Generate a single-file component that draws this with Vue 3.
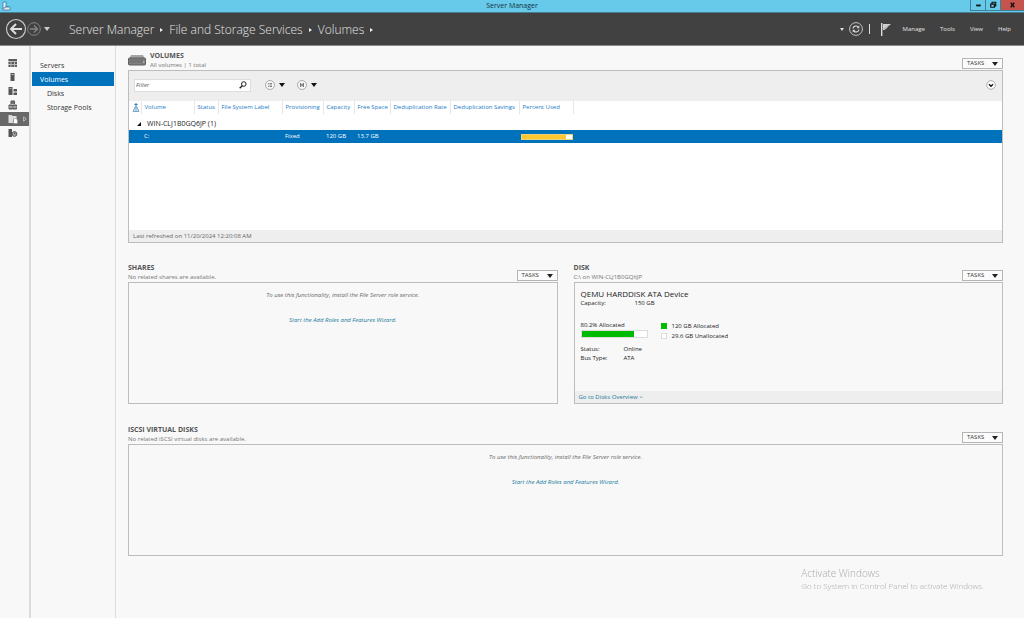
<script setup>
import { ref } from 'vue'

const filter = ref('')
const crumbs = ['Server Manager', 'File and Storage Services', 'Volumes']
const menus = ['Manage', 'Tools', 'View', 'Help']
const nav = [
  { label: 'Servers' },
  { label: 'Volumes', active: true },
  { label: 'Disks', child: true },
  { label: 'Storage Pools', child: true }
]
const columns = [
  { label: 'Volume', cls: 'c-volume' },
  { label: 'Status', cls: 'c-status' },
  { label: 'File System Label', cls: 'c-label' },
  { label: 'Provisioning', cls: 'c-prov' },
  { label: 'Capacity', cls: 'c-cap' },
  { label: 'Free Space', cls: 'c-free' },
  { label: 'Deduplication Rate', cls: 'c-rate' },
  { label: 'Deduplication Savings', cls: 'c-save' },
  { label: 'Percent Used', cls: 'c-used' }
]
const volume = { name: 'C:', provisioning: 'Fixed', capacity: '120 GB', free: '13.7 GB', used: 88 }
const disk = { allocated: 80.2 }
</script>

<template>
  <div class="window">
    <header class="titlebar">
      <svg class="app-icon" viewBox="0 0 10 10" aria-hidden="true">
        <path d="M2 1h3v7H2z" fill="#e6f4fa" stroke="#2c7fae" stroke-width=".8" />
        <path d="M4 6h5v3H2V7h2z" fill="#dcebf2" stroke="#47708a" stroke-width=".7" />
        <path d="M5.500 5h2v1h-2z" fill="#2c7fae" />
      </svg>
      <h1>Server Manager</h1>
      <div class="window-buttons">
        <button class="wb" aria-label="Minimize">
          <svg viewBox="0 0 14 11"><path d="M5 5h5v2H5z" fill="#111" /></svg>
        </button>
        <button class="wb" aria-label="Restore">
          <svg viewBox="0 0 14 11"><path d="M6 4V2.500h4v4H8.500M4.500 4.500h4v3.500h-4z" fill="none" stroke="#111" stroke-width="1.300" /></svg>
        </button>
        <button class="wb close" aria-label="Close">
          <svg viewBox="0 0 24 11"><path d="M10 3l4 5M14 3l-4 5" stroke="#111" stroke-width="1.500" /></svg>
        </button>
      </div>
    </header>

    <div class="toolbar">
      <button class="back" aria-label="Back">
        <svg viewBox="0 0 22 22"><circle cx="11" cy="11" r="9.500" fill="none" stroke="#c8c8c8" stroke-width="1.200" /><path d="M17 11H6M11 6L6 11l5 5" fill="none" stroke="#ddd" stroke-width="2" /></svg>
      </button>
      <button class="forward" aria-label="Forward">
        <svg viewBox="0 0 14 14"><circle cx="7" cy="7" r="6.300" fill="none" stroke="#858585" stroke-width="1" /><path d="M3 7h7M7 3.500L10.500 7 7 10.500" fill="none" stroke="#858585" stroke-width="1.400" /></svg>
      </button>
      <button class="history" aria-label="History">
        <svg viewBox="0 0 6 4"><path d="M0 0h6L3 4z" fill="#ccc" /></svg>
      </button>
      <nav class="crumbs" aria-label="Breadcrumb">
        <template v-for="c in crumbs" :key="c">
          <a href="#">{{ c }}</a>
          <svg viewBox="0 0 3 4" aria-hidden="true"><path d="M0 0l3 2-3 2z" fill="#eee" /></svg>
        </template>
      </nav>
      <div class="actions">
        <button class="more" aria-label="Notifications menu"><svg viewBox="0 0 4 3"><path d="M0 0h4L2 3z" fill="#ddd" /></svg></button>
        <button class="refresh" aria-label="Refresh">
          <svg viewBox="0 0 14 14"><circle cx="7" cy="7" r="6.400" fill="none" stroke="#c4c4c4" /><path d="M4 6.500C4.300 4 7.500 3.200 9.300 5M10 7.500C9.700 10 6.500 10.800 4.700 9" fill="none" stroke="#d6d6d6" stroke-width="1.200" /><path d="M10.300 3.500v2.800H7.500zM3.700 10.500V7.700h2.800z" fill="#d6d6d6" /></svg>
        </button>
        <span class="divider"></span>
        <button class="flag" aria-label="Notifications">
          <svg viewBox="0 0 10 13"><path d="M.7 0v13" stroke="#ddd" stroke-width="1.400" /><path d="M2 1h8L7.200 3.600 6 5 3.500 7H2z" fill="#cfcfcf" /><path d="M3 6l5-4" stroke="#888" stroke-width=".5" /></svg>
        </button>
        <button v-for="m in menus" :key="m" class="menu">{{ m }}</button>
      </div>
    </div>

    <div class="body">
      <aside class="rail">
        <button aria-label="Dashboard"><svg viewBox="0 0 10 10"><path d="M.5 1H9v8H.5z" fill="#bbb" /><path d="M.5 1H9v2H.5zM.5 4h2v2h-2zM3.500 4H6v2H3.500zM7 4h2v2H7zM.5 7h2v2h-2zM3.500 7H6v2H3.500zM7 7h2v2H7z" fill="#5c5c5c" /></svg></button>
        <button aria-label="Local Server"><svg viewBox="0 0 10 10"><path d="M2.500 1h4v8h-4z" fill="#555" /><path d="M3.500 2.500h2" stroke="#ddd" stroke-width=".8" /></svg></button>
        <button aria-label="All Servers"><svg viewBox="0 0 10 10"><path d="M.5 1h4v8h-4zM5.500 3H9v2.500H5.500zM5.500 6.500H9V9H5.500z" fill="#555" /><path d="M1.500 2.500h2" stroke="#ddd" stroke-width=".6" /></svg></button>
        <button aria-label="Server Groups"><svg viewBox="0 0 10 10"><path d="M3 4V1h3.500v3M1 5h3.500v4H1zM5 5h3.500v4H5z" fill="#777" stroke="#555" /><path d="M1 7h8" stroke="#eee" stroke-width=".7" /></svg></button>
        <button class="selected" aria-label="File and Storage Services">
          <svg viewBox="0 0 10 10"><path d="M.5 1h3l1 1h4v3H5v4H.5z" fill="#ddd" /><path d="M5.500 4.500H8L9.500 6v3.500h-4z" fill="#fff" stroke="#777" stroke-width=".4" /></svg>
          <svg class="expand" viewBox="0 0 4 6"><path d="M.6.800L3.300 3 .6 5.200z" fill="none" stroke="#ddd" stroke-width=".7" /></svg>
        </button>
        <button aria-label="Other Services"><svg viewBox="0 0 10 10"><path d="M.5 1H4v8H.5z" fill="#555" /><circle cx="6.500" cy="6" r="2.400" fill="#aaa" stroke="#555" /><path d="M6.500 4.500V6h1" stroke="#444" fill="none" stroke-width=".7" /></svg></button>
      </aside>

      <nav class="side" aria-label="Storage">
        <a v-for="n in nav" :key="n.label" href="#" :class="{ active: n.active, child: n.child }">{{ n.label }}</a>
      </nav>

      <main>
        <section class="panel volumes">
          <div class="head">
            <svg class="drive" viewBox="0 0 18 12" aria-hidden="true"><path d="M3 1h12l2 4H1z" fill="#a5a5a5" /><rect x=".5" y="4" width="17" height="7" rx="1" fill="#808080" stroke="#5f5f5f" /><path d="M2 6h13M2 8h13" stroke="#6d6d6d" /><path d="M15 8h1.500" stroke="#ddd" /></svg>
            <div class="titles">
              <h2>VOLUMES</h2>
              <p>All volumes | 1 total</p>
            </div>
            <button class="tasks">TASKS<svg viewBox="0 0 6 4"><path d="M0 0h6L3 4z" fill="#222" /></svg></button>
          </div>
          <div class="box">
            <div class="filterbar">
              <div class="search">
                <input v-model="filter" type="text" placeholder="Filter" aria-label="Filter" />
                <button aria-label="Search"><svg viewBox="0 0 8 8"><circle cx="4.800" cy="3" r="2.300" fill="none" stroke="#222" /><path d="M3.200 4.700L.7 7.300" stroke="#222" stroke-width="1.400" /></svg></button>
              </div>
              <button class="round" aria-label="Saved queries">
                <svg class="disc" viewBox="0 0 10 10"><circle cx="5" cy="5" r="4.500" fill="#f7f7f7" stroke="#999" stroke-width=".8" /><path d="M3 3.500h.8M3 5h.8M3 6.500h.8M4.500 3.500H7M4.500 5H7M4.500 6.500H7" stroke="#666" stroke-width=".8" /></svg>
                <svg class="caret" viewBox="0 0 6 4"><path d="M0 0h6L3 4z" fill="#111" /></svg>
              </button>
              <button class="round" aria-label="Save query">
                <svg class="disc" viewBox="0 0 10 10"><circle cx="5" cy="5" r="4.500" fill="#f7f7f7" stroke="#999" stroke-width=".8" /><path d="M3 3h4v4H3z" fill="#777" /><path d="M4 3h2v1.300H4zM4 5.700h2V7H4z" fill="#ddd" /></svg>
                <svg class="caret" viewBox="0 0 6 4"><path d="M0 0h6L3 4z" fill="#111" /></svg>
              </button>
              <button class="collapse" aria-label="Expand criteria">
                <svg viewBox="0 0 10 10"><circle cx="5" cy="5" r="4.300" fill="#fff" stroke="#999" stroke-width=".8" /><path d="M3 4.300l2 2 2-2" fill="none" stroke="#111" stroke-width="1.400" /></svg>
              </button>
            </div>
            <div class="grid">
              <table>
                <thead>
                  <tr>
                    <th class="c-icon"><svg viewBox="0 0 8 9" aria-label="Alert"><path d="M2 2l2-2 2 2z" fill="#1f7fc4" /><path d="M4 2.500L7 8.400H1z" fill="#e4f0f8" stroke="#3b7fae" stroke-width=".7" /><path d="M4 4.500v2M4 7v.800" stroke="#2d6f9e" stroke-width=".8" /></svg></th>
                    <th v-for="c in columns" :key="c.label" :class="c.cls">{{ c.label }}</th>
                    <th class="c-rest"></th>
                  </tr>
                </thead>
                <tbody>
                  <tr class="group">
                    <td colspan="11"><svg viewBox="0 0 4 4"><path d="M4 0v4H0z" fill="#111" /></svg>WIN-CLJ1B0GQ6JP (1)</td>
                  </tr>
                  <tr class="row">
                    <td></td>
                    <td>{{ volume.name }}</td>
                    <td></td>
                    <td></td>
                    <td>{{ volume.provisioning }}</td>
                    <td>{{ volume.capacity }}</td>
                    <td>{{ volume.free }}</td>
                    <td></td>
                    <td></td>
                    <td class="meter"><div class="used"><div class="used-fill" :style="{ width: volume.used + '%' }"></div></div></td>
                    <td></td>
                  </tr>
                </tbody>
              </table>
            </div>
            <div class="foot">Last refreshed on 11/20/2024 12:20:08 AM</div>
          </div>
        </section>

        <div class="pair">
          <section class="panel">
            <div class="head">
              <div class="titles">
                <h2>SHARES</h2>
                <p>No related shares are available.</p>
              </div>
              <button class="tasks">TASKS<svg viewBox="0 0 6 4"><path d="M0 0h6L3 4z" fill="#222" /></svg></button>
            </div>
            <div class="box empty">
              <p>To use this functionality, install the File Server role service.</p>
              <a href="#">Start the Add Roles and Features Wizard.</a>
            </div>
          </section>

          <section class="panel">
            <div class="head">
              <div class="titles">
                <h2>DISK</h2>
                <p>C:\ on WIN-CLJ1B0GQ6JP</p>
              </div>
              <button class="tasks">TASKS<svg viewBox="0 0 6 4"><path d="M0 0h6L3 4z" fill="#222" /></svg></button>
            </div>
            <div class="box disk">
              <div class="disk-body">
                <h3>QEMU HARDDISK ATA Device</h3>
                <div class="capacity"><span>Capacity:</span><span>150 GB</span></div>
                <div class="usage">
                  <div class="alloc">
                    <span>{{ disk.allocated }}% Allocated</span>
                    <div class="bar"><div class="bar-fill" :style="{ width: disk.allocated + '%' }"></div></div>
                  </div>
                  <ul class="legend">
                    <li><i class="sw on"></i>120 GB Allocated</li>
                    <li><i class="sw"></i>29.6 GB Unallocated</li>
                  </ul>
                </div>
                <dl>
                  <dt>Status:</dt><dd>Online</dd>
                  <dt>Bus Type:</dt><dd>ATA</dd>
                </dl>
              </div>
              <div class="foot"><a href="#">Go to Disks Overview &gt;</a></div>
            </div>
          </section>
        </div>

        <section class="panel iscsi">
          <div class="head">
            <div class="titles">
              <h2>iSCSI VIRTUAL DISKS</h2>
              <p>No related iSCSI virtual disks are available.</p>
            </div>
            <button class="tasks">TASKS<svg viewBox="0 0 6 4"><path d="M0 0h6L3 4z" fill="#222" /></svg></button>
          </div>
          <div class="box empty">
            <p>To use this functionality, install the File Server role service.</p>
            <a href="#">Start the Add Roles and Features Wizard.</a>
          </div>
        </section>
      </main>
    </div>

    <div class="watermark">
      <strong>Activate Windows</strong>
      <span>Go to System in Control Panel to activate Windows.</span>
    </div>
  </div>
</template>

<style>
body { margin: 0; background: #f8f8f8; }
</style>

<style scoped>
.window {
  min-height: 100vh;
  display: flex;
  flex-direction: column;
  font: 6px/9px "Open Sans", "Noto Sans", sans-serif;
  color: #333;
  background: #f8f8f8;
}
.window * { box-sizing: border-box; }
h1, h2, h3, p, ul, dl, dd { margin: 0; padding: 0; }
button, input { font: inherit; color: inherit; margin: 0; padding: 0; border: 0; background: none; }
svg { display: block; flex: none; }
a { color: inherit; text-decoration: none; }

.titlebar {
  display: grid;
  grid-template-columns: 1fr auto 1fr;
  align-items: center;
  height: 13px;
  background: #67caea;
  border-bottom: 1px solid #4a7d90;
}
.app-icon { width: 10px; height: 10px; margin-left: 1px; }
h1 { font-size: 7px; line-height: 12px; font-weight: 400; color: #16323d; }
.window-buttons { display: flex; justify-content: flex-end; align-self: start; }
.wb { width: 15px; height: 11px; border: 1px solid #3f8096; border-width: 0 0 1px 1px; }
.wb svg { width: 100%; height: 10px; }
.wb.close { width: 24px; background: #c4544d; }

.toolbar {
  display: flex;
  align-items: center;
  height: 33px;
  padding-left: 5px;
  background: #414141;
  border-bottom: 1px solid #8c8c8c;
  color: #e4e4e4;
}
.back svg { width: 22px; height: 22px; }
.forward svg { width: 14px; height: 14px; }
.history { margin-left: 3px; }
.history svg { width: 6px; height: 4px; }
.crumbs { display: flex; align-items: center; gap: 6px; margin-left: 19px; padding-top: 2px; font-size: 12px; line-height: 18px; font-weight: 300; }
.crumbs svg { width: 3px; height: 4px; }
.actions { display: flex; align-items: center; margin-left: auto; padding-right: 13px; }
.more svg { width: 4px; height: 3px; }
.refresh { margin-left: 5px; }
.refresh svg { width: 14px; height: 14px; }
.divider { width: 1px; height: 10px; margin-left: 6px; background: #ddd; }
.flag { margin: 0 12px 0 11px; }
.flag svg { width: 10px; height: 13px; }
.menu + .menu { margin-left: 15px; }

.body { display: flex; flex: 1; }
.rail { width: 31px; padding-top: 10px; border-right: 2px solid #dcdcdc; }
.rail button { display: flex; align-items: center; width: 100%; height: 14px; padding-left: 8px; }
.rail svg { width: 10px; height: 10px; }
.rail .selected { background: #686868; }
.rail .expand { width: 4px; height: 6px; margin-left: 5px; }
.side { width: 85px; padding: 12px 1px 0; border-right: 1px solid #dcdcdc; }
.side a { display: block; padding: 2px 0 0 8px; font-size: 7px; line-height: 12px; }
.side .child { padding-left: 15px; }
.side .active { background: #0072bc; color: #fff; }

main { flex: 1; min-width: 0; padding: 4px 21px 0 12px; }
.head { display: flex; align-items: flex-end; min-height: 20px; }
.drive { width: 18px; height: 12px; margin: 0 4px 4px 0; }
.titles { flex: 1; }
h2 { font-size: 7px; line-height: 10px; font-weight: 700; color: #555; }
.head p { color: #777; }
.tasks { display: flex; align-items: center; justify-content: space-between; width: 41px; height: 11px; margin-bottom: 1px; padding: 0 4px; border: 1px solid #b5b5b5; background: #fbfbfb; }
.tasks svg { width: 6px; height: 4px; }
.box { display: flex; flex-direction: column; border: 1px solid #bdbdbd; }
.filterbar { display: flex; align-items: center; height: 30px; padding: 0 6px 2px 5px; background: #eee; }
.search { display: flex; align-items: center; width: 117px; height: 13px; padding-right: 3px; border: 1px solid #ddd; background: #fff; }
.search input { flex: 1; min-width: 0; padding-left: 1px; outline: 0; font-style: italic; }
.search input::placeholder { color: #555; opacity: 1; }
.search svg { width: 8px; height: 8px; }
.round { display: flex; align-items: center; gap: 4px; margin-left: 14px; }
.round + .round { margin-left: 12px; }
.disc, .collapse svg { width: 10px; height: 10px; }
.caret { width: 6px; height: 4px; }
.collapse { margin-left: auto; }
.grid { min-height: 129px; background: #fff; }
table { width: 100%; table-layout: fixed; border-collapse: collapse; }
th { height: 13px; padding: 0 0 0 3px; font-weight: 400; text-align: left; white-space: nowrap; color: #1c7cc4; border-right: 1px solid #e6e6e6; }
td { padding: 0 0 0 3px; white-space: nowrap; }
.c-icon { width: 12px; }
.c-icon svg { width: 8px; height: 9px; }
.c-volume { width: 53px; }
.c-status { width: 24px; }
.c-label { width: 64px; }
.c-prov { width: 41px; }
.c-cap { width: 31px; }
.c-free { width: 36px; }
.c-rate { width: 60px; }
.c-save { width: 69px; }
.c-used { width: 54px; }
.c-rest { border: 0; }
.group td { height: 16px; padding: 4px 0 0 8px; font-size: 7px; line-height: 12px; color: #222; }
.group svg { display: inline-block; width: 4px; height: 4px; margin-right: 6px; }
.row td { height: 13px; background: #0072bc; color: #fff; }
.row .meter { padding: 0 0 0 2px; }
.used { height: 6px; border: 1px solid #f3d27c; background: #fff; }
.used-fill { height: 100%; background: #ffc832; }
.foot { padding: 1px 4px; line-height: 10px; background: #eee; color: #666; }

.pair { display: grid; grid-template-columns: 1fr 1fr; gap: 16px; margin-top: 19px; }
.iscsi { margin-top: 20px; }
.empty { align-items: center; gap: 16px; min-height: 122px; padding-top: 8px; font-style: italic; color: #666; }
.iscsi .empty { min-height: 112px; }
.empty a, .foot a { color: #207a9c; }
.disk { min-height: 122px; }
.disk-body { flex: 1; padding: 5px 6px; color: #222; }
h3 { font-size: 8px; line-height: 11px; font-weight: 400; }
.capacity { display: grid; grid-template-columns: 54px 1fr; }
.usage { display: flex; gap: 13px; margin-top: 13px; }
.alloc { width: 67px; }
.bar { height: 8px; border: 1px solid #ddd; background: #fff; }
.bar-fill { height: 100%; background: #00bc00; }
.legend { list-style: none; }
.legend li { display: flex; align-items: center; gap: 5px; line-height: 10px; }
.sw { width: 6px; height: 6px; border: 1px solid #ddd; background: #fff; }
.sw.on { border: 0; background: #00bc00; }
dl { display: grid; grid-template-columns: 43px 1fr; margin-top: 4px; }
.disk .foot { padding: 1px 4px; }

.watermark { position: fixed; right: 40px; bottom: 27px; display: flex; flex-direction: column; color: #aaa; font-size: 8px; line-height: 11px; font-weight: 300; pointer-events: none; }
.watermark strong { font-size: 10px; line-height: 14px; font-weight: 300; }
</style>
